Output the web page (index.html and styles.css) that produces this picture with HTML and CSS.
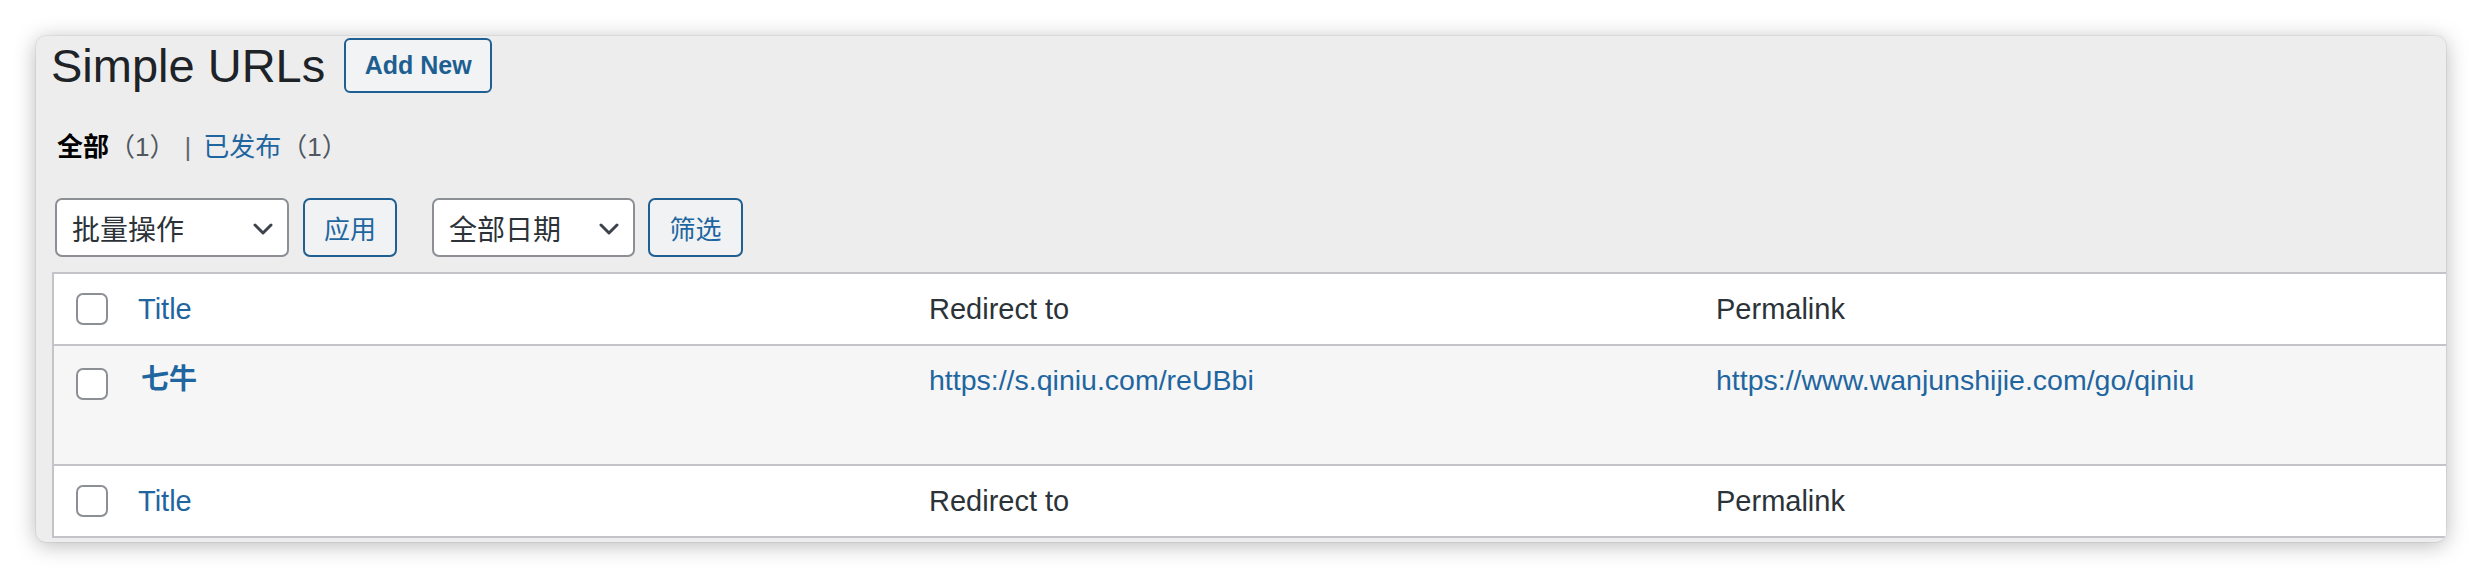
FILE: index.html
```html
<!DOCTYPE html>
<html lang="zh-CN">
<head>
<meta charset="utf-8">
<title>Simple URLs</title>
<link rel="stylesheet" href="styles.css">
</head>
<body>
<div class="window">
  <div class="title-row">
    <h1 class="page-title">Simple URLs</h1>
    <a class="page-title-action" href="#">Add New</a>
  </div>
  <ul class="subsubsub">
    <li class="current">全部<span class="count">（1）</span></li>
    <li class="sep">|</li>
    <li><a class="link" href="#">已发布</a><span class="count">（1）</span></li>
  </ul>
  <div class="tablenav">
    <div class="select bulk">
      <span>批量操作</span>
      <svg class="chevron" width="20" height="12" viewBox="0 0 20 12"><path d="M2 2 L10 10 L18 2" fill="none" stroke="#3c434a" stroke-width="3" stroke-linecap="round" stroke-linejoin="round"/></svg>
    </div>
    <button class="btn apply">应用</button>
    <div class="select date">
      <span>全部日期</span>
      <svg class="chevron" width="20" height="12" viewBox="0 0 20 12"><path d="M2 2 L10 10 L18 2" fill="none" stroke="#3c434a" stroke-width="3" stroke-linecap="round" stroke-linejoin="round"/></svg>
    </div>
    <button class="btn filter">筛选</button>
  </div>
  <div class="list-table">
    <div class="trow thead">
      <div class="cell check"><span class="cb"></span></div>
      <div class="cell"><a class="link" href="#">Title</a></div>
      <div class="cell">Redirect to</div>
      <div class="cell">Permalink</div>
    </div>
    <div class="trow tbody">
      <div class="cell check"><span class="cb"></span></div>
      <div class="cell"><a class="link row-title" href="#">七牛</a></div>
      <div class="cell"><a class="link url" href="#">https://s.qiniu.com/reUBbi</a></div>
      <div class="cell"><a class="link url" href="#">https://www.wanjunshijie.com/go/qiniu</a></div>
    </div>
    <div class="trow tfoot">
      <div class="cell check"><span class="cb"></span></div>
      <div class="cell"><a class="link" href="#">Title</a></div>
      <div class="cell">Redirect to</div>
      <div class="cell">Permalink</div>
    </div>
  </div>
</div>
</body>
</html>
```

FILE: styles.css
```css
* { box-sizing: border-box; }

html, body {
  margin: 0;
  padding: 0;
  background: #ffffff;
}

body {
  width: 2482px;
  height: 578px;
  overflow: hidden;
  font-family: "Liberation Sans", "Noto Sans CJK SC", sans-serif;
  color: #1d2327;
}

.window {
  margin: 36px 0 0 36px;
  width: 2410px;
  background: #ededed;
  border-radius: 10px;
  overflow: hidden;
  padding: 2px 0 4px 16px;
  box-shadow: 0 3px 22px rgba(0, 0, 0, 0.28), 0 0 0 1px rgba(0, 0, 0, 0.05);
}

.title-row {
  display: flex;
  align-items: center;
  height: 55px;
}

.page-title {
  margin: 0 0 0 -1px;
  font-size: 47px;
  font-weight: 400;
  line-height: 47px;
  color: #1d2327;
}

.page-title-action {
  margin-left: 19px;
  width: 148px;
  height: 55px;
  display: flex;
  align-items: center;
  justify-content: center;
  border: 2px solid #1f5f92;
  border-radius: 6px;
  background: #f2f3f4;
  color: #1e5f92;
  font-size: 25px;
  font-weight: 700;
  text-decoration: none;
}

.subsubsub {
  list-style: none;
  margin: 34px 0 0 5px;
  padding: 0;
  display: flex;
  height: 40px;
  line-height: 40px;
  font-size: 26px;
  color: #50575e;
}

.subsubsub .current {
  font-weight: 700;
  color: #000;
}

.subsubsub .count {
  font-weight: 400;
  color: #50575e;
}

.subsubsub .sep {
  margin: 0 12px 0 9px;
  color: #646970;
  font-weight: 400;
}

.link {
  color: #1f66a0;
  text-decoration: none;
}

.tablenav {
  margin-top: 31px;
  padding-left: 3px;
  display: flex;
  align-items: center;
  height: 59px;
}

.select {
  height: 59px;
  display: flex;
  align-items: center;
  justify-content: space-between;
  padding: 0 14px 0 15px;
  border: 2px solid #8c8f94;
  border-radius: 7px;
  background: #ffffff;
  font-size: 28px;
  color: #2c3338;
}

.select .chevron {
  display: block;
  margin-top: 2px;
}

.bulk { width: 234px; }
.date { width: 203px; margin-left: 35px; }

.btn {
  height: 59px;
  width: 94px;
  padding: 0;
  border: 2px solid #1f5f92;
  border-radius: 7px;
  background: #f0f2f4;
  color: #1f66a0;
  font-family: "Liberation Sans", "Noto Sans CJK SC", sans-serif;
  font-size: 26px;
}

.apply { margin-left: 14px; }
.filter { margin-left: 13px; width: 95px; }

.list-table {
  margin-top: 15px;
  border-top: 2px solid #c3c4c7;
  border-left: 2px solid #c3c4c7;
  border-bottom: 2px solid #c3c4c7;
  background: #ffffff;
}

.trow {
  display: grid;
  grid-template-columns: 84px 791px 787px 1fr;
}

.thead, .tfoot {
  height: 70px;
  align-items: center;
  font-size: 29px;
  color: #2c3338;
  background: #ffffff;
}

.thead { border-bottom: 2px solid #c3c4c7; height: 72px; }

.tbody {
  height: 120px;
  align-items: start;
  background: #f6f6f6;
  border-bottom: 2px solid #c3c4c7;
}

.check {
  padding-left: 22px;
  display: flex;
  align-items: center;
}

.tbody .check { padding-top: 22px; }

.tbody .cell:not(.check) {
  padding-top: 14px;
  line-height: 40px;
}

.cb {
  display: block;
  width: 32px;
  height: 32px;
  border: 2px solid #8c8f94;
  border-radius: 7px;
  background: #ffffff;
}

.row-title {
  font-size: 28px;
  font-weight: 700;
  padding-left: 3px;
}

.url {
  font-size: 28.5px;
}
```
